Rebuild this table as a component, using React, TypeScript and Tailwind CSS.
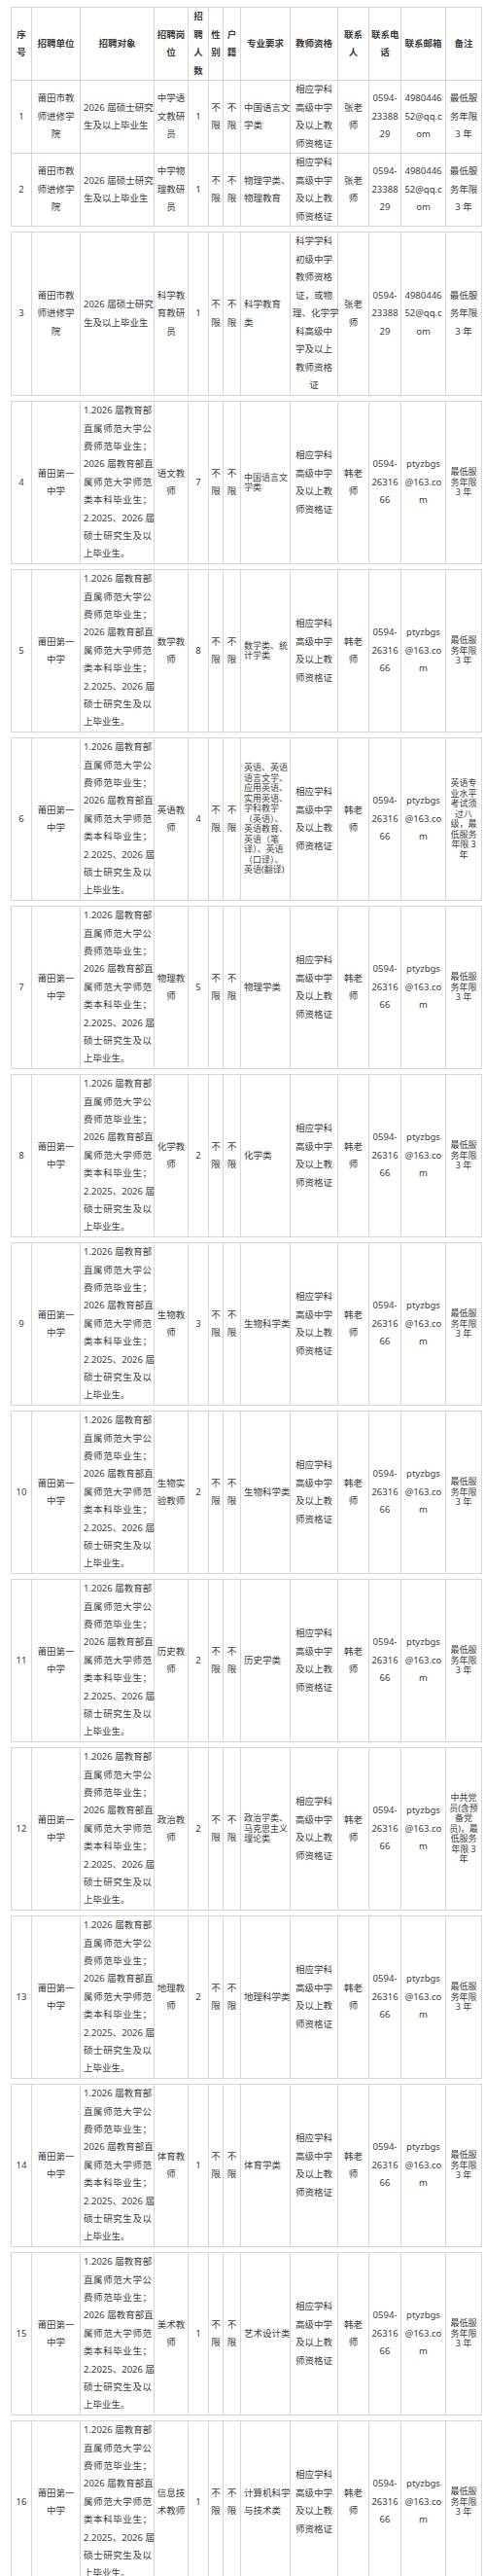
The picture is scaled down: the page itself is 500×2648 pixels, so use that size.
import React from "react";

const widths = [21, 50, 76, 35, 21, 15, 18, 51, 49, 32, 33, 46, 37];

const fontStack = { fontFamily: '"Noto Sans", "Noto Sans CJK SC", sans-serif' };

const target = [
  "1.2026 届教育部",
  "直属师范大学公",
  "费师范毕业生；",
  "2026 届教育部直",
  "属师范大学师范",
  "类本科毕业生；",
  "2.2025、2026 届",
  "硕士研究生及以",
  "上毕业生。",
];

const qual = ["相应学科", "高级中学", "及以上教", "师资格证"];
const phone2 = ["0594-", "26316", "66"];
const mail2 = ["ptyzbgs", "@163.co", "m"];
const noteStd = ["最低服", "务年限", "3 年"];

type Row = {
  n: number;
  pos: string[];
  count: string;
  major: string[];
  majorCompact?: boolean;
  note?: string[];
};

const rows: Row[] = [
  { n: 4, pos: ["语文教", "师"], count: "7", major: ["中国语言文", "学类"], majorCompact: true },
  { n: 5, pos: ["数学教", "师"], count: "8", major: ["数学类、统", "计学类"], majorCompact: true },
  {
    n: 6,
    pos: ["英语教", "师"],
    count: "4",
    major: [
      "英语、英语",
      "语言文学、",
      "应用英语、",
      "实用英语、",
      "学科教学",
      "（英语）、",
      "英语教育、",
      "英语（笔",
      "译）、英语",
      "（口译）、",
      "英语(翻译)",
    ],
    majorCompact: true,
    note: ["英语专", "业水平", "考试须", "过八", "级，最", "低服务", "年限 3", "年"],
  },
  { n: 7, pos: ["物理教", "师"], count: "5", major: ["物理学类"] },
  { n: 8, pos: ["化学教", "师"], count: "2", major: ["化学类"] },
  { n: 9, pos: ["生物教", "师"], count: "3", major: ["生物科学类"] },
  { n: 10, pos: ["生物实", "验教师"], count: "2", major: ["生物科学类"] },
  { n: 11, pos: ["历史教", "师"], count: "2", major: ["历史学类"] },
  {
    n: 12,
    pos: ["政治教", "师"],
    count: "2",
    major: ["政治学类、", "马克思主义", "理论类"],
    majorCompact: true,
    note: ["中共党", "员(含预", "备党", "员)，最", "低服务", "年限 3", "年"],
  },
  { n: 13, pos: ["地理教", "师"], count: "2", major: ["地理科学类"] },
  { n: 14, pos: ["体育教", "师"], count: "1", major: ["体育学类"] },
  { n: 15, pos: ["美术教", "师"], count: "1", major: ["艺术设计类"] },
  { n: 16, pos: ["信息技", "术教师"], count: "1", major: ["计算机科学", "与技术类"] },
];

const Lines = ({ lines }: { lines: string[] }) => (
  <>
    {lines.map((l, i) => (
      <div key={i} className="whitespace-nowrap">
        {l}
      </div>
    ))}
  </>
);

const Td = ({
  children,
  align = "center",
  compact = false,
  className = "",
}: {
  children: React.ReactNode;
  align?: "center" | "left";
  compact?: boolean;
  className?: string;
}) => (
  <td
    className={`border border-[#d6d6d6] align-middle px-[2px] py-0 ${
      align === "center" ? "text-center" : "text-left"
    } ${compact ? "text-[9px] leading-[10.5px]" : "text-[9.5px] leading-[18.5px]"} ${className}`}
  >
    {children}
  </td>
);

const Cols = () => (
  <colgroup>
    {widths.map((w, i) => (
      <col key={i} style={{ width: w }} />
    ))}
  </colgroup>
);

const TargetCell = () => (
  <td className="border border-[#d6d6d6] align-middle pl-[3px] pr-[2px] py-0 text-[9.5px] leading-[18.4px]">
    {target.map((l, i) => (
      <div
        key={i}
        className={
          i < target.length - 1
            ? "whitespace-nowrap text-justify [text-align-last:justify]"
            : "whitespace-nowrap"
        }
      >
        {l}
      </div>
    ))}
  </td>
);

const Table = ({ children }: { children: React.ReactNode }) => (
  <table className="w-[484px] table-fixed border-collapse border border-[#cfcfcf] bg-white">
    <Cols />
    <tbody>{children}</tbody>
  </table>
);

const TopRow = ({ n, pos, major }: { n: number; pos: string[]; major: string }) => (
  <tr className="h-[74px]">
    <Td>{n}</Td>
    <Td>
      <Lines lines={["莆田市教", "师进修学", "院"]} />
    </Td>
    <Td align="left" className="pl-[3px]">
      <Lines lines={["2026 届硕士研究", "生及以上毕业生"]} />
    </Td>
    <Td>
      <Lines lines={pos} />
    </Td>
    <Td>1</Td>
    <Td>
      <Lines lines={["不", "限"]} />
    </Td>
    <Td>
      <Lines lines={["不", "限"]} />
    </Td>
    <Td align="left" className="pl-[3px]">
      <Lines lines={major.split("|")} />
    </Td>
    <Td>
      <Lines lines={qual} />
    </Td>
    <Td>
      <Lines lines={["张老", "师"]} />
    </Td>
    <Td>
      <Lines lines={["0594-", "23388", "29"]} />
    </Td>
    <Td>
      <Lines lines={["4980446", "52@qq.c", "om"]} />
    </Td>
    <Td>
      <Lines lines={noteStd} />
    </Td>
  </tr>
);

export default function App() {
  return (
    <div className="min-h-[2648px] w-[500px] bg-white pl-[11px] pt-[7px] text-[#3c3c3c]" style={fontStack}>
      <Table>
        <tr className="h-[75px] font-bold">
          <Td>
            <Lines lines={["序", "号"]} />
          </Td>
          <Td>招聘单位</Td>
          <Td>招聘对象</Td>
          <Td>
            <Lines lines={["招聘岗", "位"]} />
          </Td>
          <Td>
            <Lines lines={["招", "聘", "人", "数"]} />
          </Td>
          <Td>
            <Lines lines={["性", "别"]} />
          </Td>
          <Td>
            <Lines lines={["户", "籍"]} />
          </Td>
          <Td>专业要求</Td>
          <Td>教师资格</Td>
          <Td>
            <Lines lines={["联系", "人"]} />
          </Td>
          <Td>
            <Lines lines={["联系电", "话"]} />
          </Td>
          <Td>联系邮箱</Td>
          <Td>备注</Td>
        </tr>
        <TopRow n={1} pos={["中学语", "文教研", "员"]} major="中国语言文|学类" />
        <TopRow n={2} pos={["中学物", "理教研", "员"]} major="物理学类、|物理教育" />
      </Table>

      <div className="mt-[5px]">
        <Table>
          <tr className="h-[168px]">
            <Td>3</Td>
            <Td>
              <Lines lines={["莆田市教", "师进修学", "院"]} />
            </Td>
            <Td align="left" className="pl-[3px]">
              <Lines lines={["2026 届硕士研究", "生及以上毕业生"]} />
            </Td>
            <Td>
              <Lines lines={["科学教", "育教研", "员"]} />
            </Td>
            <Td>1</Td>
            <Td>
              <Lines lines={["不", "限"]} />
            </Td>
            <Td>
              <Lines lines={["不", "限"]} />
            </Td>
            <Td align="left" className="pl-[3px]">
              科学教育类
            </Td>
            <Td>
              <Lines
                lines={[
                  "科学学科",
                  "初级中学",
                  "教师资格",
                  "证，或物",
                  "理、化学学",
                  "科高级中",
                  "学及以上",
                  "教师资格",
                  "证",
                ]}
              />
            </Td>
            <Td>
              <Lines lines={["张老", "师"]} />
            </Td>
            <Td>
              <Lines lines={["0594-", "23388", "29"]} />
            </Td>
            <Td>
              <Lines lines={["4980446", "52@qq.c", "om"]} />
            </Td>
            <Td>
              <Lines lines={noteStd} />
            </Td>
          </tr>
        </Table>
      </div>

      {rows.map((r) => (
        <div key={r.n} className="mt-[5px]">
          <Table>
            <tr className="h-[167px]">
              <Td>{r.n}</Td>
              <Td>
                <Lines lines={["莆田第一", "中学"]} />
              </Td>
              <TargetCell />
              <Td>
                <Lines lines={r.pos} />
              </Td>
              <Td>{r.count}</Td>
              <Td>
                <Lines lines={["不", "限"]} />
              </Td>
              <Td>
                <Lines lines={["不", "限"]} />
              </Td>
              <Td align="left" compact={r.majorCompact} className="pl-[3px]">
                <Lines lines={r.major} />
              </Td>
              <Td>
                <Lines lines={qual} />
              </Td>
              <Td>
                <Lines lines={["韩老", "师"]} />
              </Td>
              <Td>
                <Lines lines={phone2} />
              </Td>
              <Td>
                <Lines lines={mail2} />
              </Td>
              <Td compact>
                <Lines lines={r.note ?? noteStd} />
              </Td>
            </tr>
          </Table>
        </div>
      ))}
    </div>
  );
}
